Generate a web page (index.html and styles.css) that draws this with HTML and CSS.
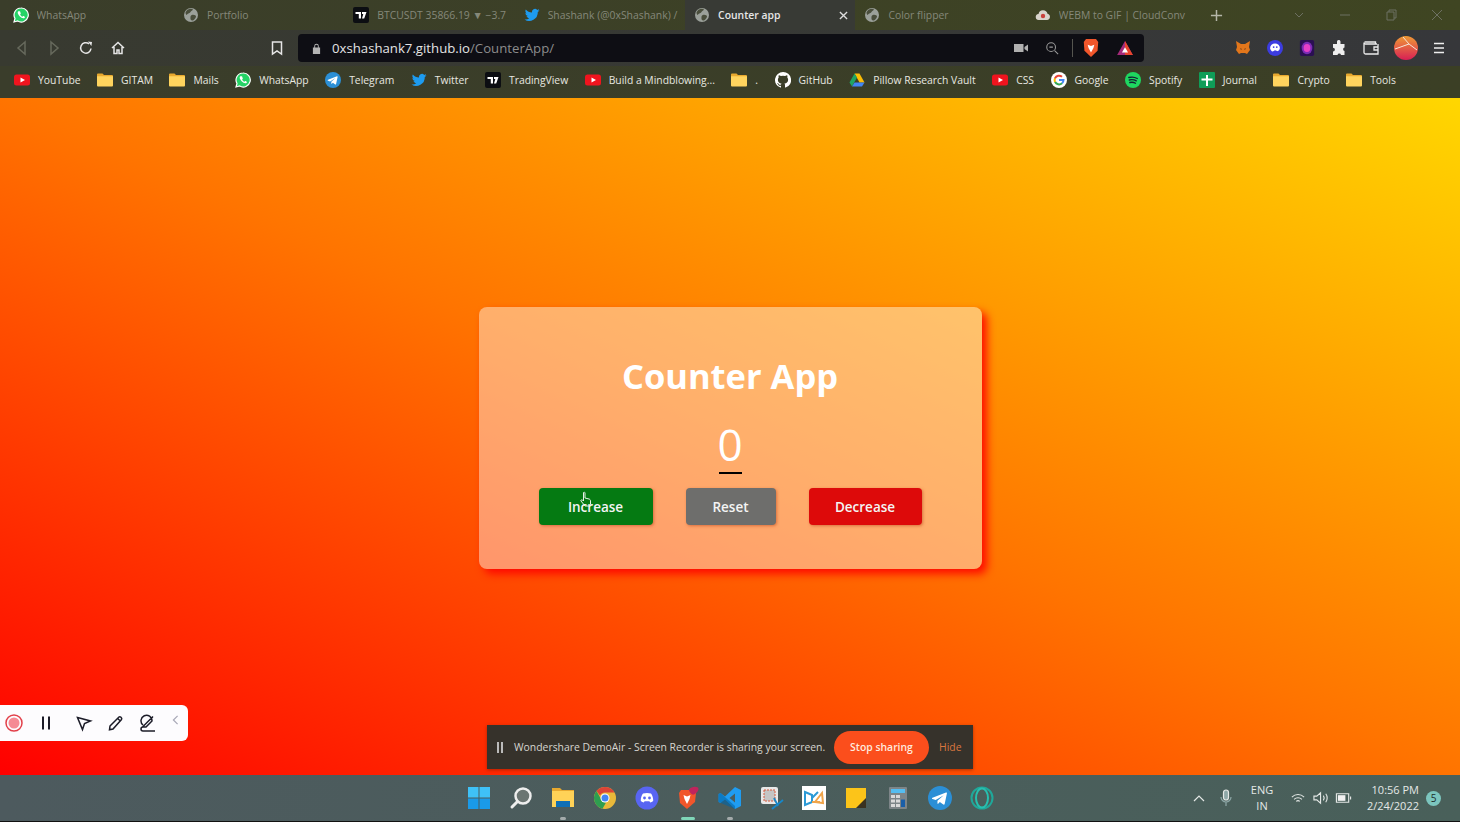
FILE: index.html
```html
<!DOCTYPE html>
<html>
  <head>
    <title>Counter app</title>
    <link rel="stylesheet" href="styles.css">
  </head>
  <body>
    <svg class="defs" width="0" height="0">
      <symbol id="whatsapp" viewBox="0 0 16 16">
        <path fill="#25d366" stroke="#fff" stroke-width="1.2" d="M8 1a7 7 0 0 0-6 10.500L1 15l3.700-1A7 7 0 1 0 8 1z"/>
        <path fill="#fff" d="M5.600 4.200c-.3 0-.9.5-.9 1.400 0 2.300 3.300 5.700 5.700 5.700 1 0 1.600-.8 1.600-1.300 0-.3-1.500-1-1.800-1l-.8.8c-.8-.2-2-1.400-2.300-2.200l.7-.8c.1-.3-.6-2.600-1-2.600z"/>
      </symbol>
      <symbol id="globe" viewBox="0 0 16 16">
        <circle cx="8" cy="8" r="7" fill="#9ba09a"/>
        <path fill="#4a4e3c" d="M5 2.500c2-1 4-1 5 0-.5 1.500-2 1-2.500 2.500S5 6 4 7.500 2.500 6 2.500 5.500 4 3 5 2.500zM9 8c2-.5 4 .5 4 1.500S11 14 9 13.500 7.500 11 7.500 10 8 8.300 9 8z"/>
      </symbol>
      <symbol id="tv" viewBox="0 0 16 16">
        <rect width="16" height="16" rx="2" fill="#0c0e12"/>
        <path fill="#fff" d="M2.500 5h5.500v6.500H5.800V7H2.500zM9 5h4.500l-2.300 6.500H9L10.300 7H9z"/>
      </symbol>
      <symbol id="twitter" viewBox="0 0 16 16">
        <path fill="#1d9bf0" d="M15.500 3.300c-.5.300-1.100.4-1.700.5.600-.4 1.100-1 1.300-1.700-.6.400-1.200.6-1.900.8A3 3 0 0 0 8 5.600C5.500 5.500 3.300 4.300 1.800 2.500c-.8 1.400-.4 3.100.9 4-.5 0-.9-.1-1.300-.4 0 1.500 1 2.700 2.400 3-.4.100-.9.100-1.300 0 .4 1.200 1.500 2 2.800 2.100A6 6 0 0 1 .5 12.500 8.600 8.600 0 0 0 13.800 5c.7-.4 1.300-1 1.700-1.700z"/>
      </symbol>
      <symbol id="youtube" viewBox="0 0 16 16">
        <rect y="2.500" width="16" height="11" rx="2.500" fill="#f0141e"/>
        <path fill="#fff" d="M6.500 5.500v5L11 8z"/>
      </symbol>
      <symbol id="folder" viewBox="0 0 16 16">
        <path fill="#e8a92f" d="M0 2.500A1 1 0 0 1 1 1.500h4.500L7 3h8a1 1 0 0 1 1 1v1H0z"/>
        <path fill="#ffd45e" d="M0 4.200h16v9.300a1 1 0 0 1-1 1H1a1 1 0 0 1-1-1z"/>
      </symbol>
      <symbol id="telegram" viewBox="0 0 16 16">
        <circle cx="8" cy="8" r="8" fill="#2b8fd6"/>
        <path fill="#fff" d="M3 7.800l9-3.500c.5-.1.700.2.600.7l-1.500 7c-.1.500-.5.600-.9.400L7.900 10.700l-1.100 1.100c-.2.200-.5.100-.5-.2V9.800l4.200-3.700-5.400 3.300L3 8.700c-.5-.2-.5-.6 0-.9z"/>
      </symbol>
    </svg>

    <div class="tabstrip">
      <div class="tab">
        <svg class="ico"><use href="#whatsapp"/></svg><span>WhatsApp</span>
      </div>
      <div class="tab">
        <svg class="ico"><use href="#globe"/></svg><span>Portfolio</span>
      </div>
      <div class="tab">
        <svg class="ico"><use href="#tv"/></svg><span>BTCUSDT 35866.19 ▼ −3.7</span>
      </div>
      <div class="tab">
        <svg class="ico"><use href="#twitter"/></svg><span>Shashank (@0xShashank) /</span>
      </div>
      <div class="tab tab-active">
        <svg class="ico"><use href="#globe"/></svg><span>Counter app</span>
        <svg class="tab-x" viewBox="0 0 10 10"><path d="M1 1l8 8M9 1l-8 8"/></svg>
      </div>
      <div class="tab">
        <svg class="ico"><use href="#globe"/></svg><span>Color flipper</span>
      </div>
      <div class="tab">
        <svg class="ico" viewBox="0 0 16 16"><path fill="#d8d4cc" d="M4 13a3 3 0 0 1-.5-6 4.600 4.600 0 0 1 9-.3A3.200 3.200 0 0 1 12 13z"/><circle cx="8" cy="9" r="2.200" fill="#c8413c"/></svg><span>WEBM to GIF | CloudConv</span>
      </div>
      <svg class="plus" viewBox="0 0 14 14"><path d="M7 1v12M1 7h12"/></svg>
      <div class="winctl">
        <svg viewBox="0 0 12 12"><path d="M2 4l4 4 4-4"/></svg>
        <svg viewBox="0 0 12 12"><path d="M1 6h10"/></svg>
        <svg viewBox="0 0 12 12"><path d="M2 3h7v8H2zM4 3V1h7v8H9"/></svg>
        <svg viewBox="0 0 12 12"><path d="M1 1l10 10M11 1L1 11"/></svg>
      </div>
    </div>

    <div class="toolbar">
      <div class="nav">
        <svg class="tb dim" viewBox="0 0 16 16"><path d="M11 2L4 8l7 6z"/></svg>
        <svg class="tb dim" viewBox="0 0 16 16"><path d="M5 2l7 6-7 6z"/></svg>
        <svg class="tb" viewBox="0 0 16 16"><path d="M13 8.500A5.200 5.200 0 1 1 11 3.800"/><path class="solid" d="M10 1.500l4 .5-.6 4z"/></svg>
        <svg class="tb" viewBox="0 0 16 16"><path d="M2 8l6-5.500L14 8M4 7v6.500h3V10h2v3.500h3V7"/></svg>
      </div>
      <svg class="tb bookmark" viewBox="0 0 16 16"><path d="M3.500 2h9v12L8 10.800 3.500 14z"/></svg>
      <div class="urlbar">
        <svg class="lock" viewBox="0 0 10 12"><path fill="#b4b4b4" d="M1 5h8v7H1zM2.500 5V3.300a2.500 2.500 0 0 1 5 0V5H6.500V3.300a1.500 1.500 0 0 0-3 0V5z"/></svg>
        <span class="url">0xshashank7.github.io<span class="url-path">/CounterApp/</span></span>
        <div class="url-end">
          <svg class="cam" viewBox="0 0 14 10"><path fill="#b0b0b0" d="M0 1h9.500v8H0zM10.500 4L14 1.500v7L10.500 6z"/></svg>
          <svg class="tb zoomglass" viewBox="0 0 16 16"><circle cx="7" cy="7" r="5"/><path d="M11 11l4 4M5 7h4"/></svg>
          <div class="url-sep"></div>
          <svg class="brave" viewBox="0 0 16 18"><path fill="#f1562b" d="M3.500 1h9l2 2.500-.6 8L8 17 2.100 11.500l-.6-8z"/><path fill="#fff" d="M5 6l3 1.200L11 6l-.8 3L8 13 5.800 9z"/></svg>
          <svg class="bat" viewBox="0 0 18 16"><path fill="#a42a7a" d="M9 0l9 16H0z"/><path fill="#e8452c" d="M9 0l9 16H9z"/><path fill="#fff" d="M9 7l3.500 6h-7z"/></svg>
        </div>
      </div>
      <div class="exts">
        <svg viewBox="0 0 16 16"><path fill="#e2761b" d="M1 1l5 3h4l5-3-1 6 1 3-3 4-2-1H6l-2 1-3-4 1-3z"/><path fill="#763d16" d="M5 8l2 1-1 1zM11 8l-2 1 1 1z"/></svg>
        <svg viewBox="0 0 18 18"><circle cx="9" cy="9" r="9" fill="#3c3ce0"/><path fill="#fff" d="M3.500 9a5.500 5 0 0 1 11 0c0 1.500-1.500 4-3 3.500L9 11.500 6.500 13C5 13 3.500 10.500 3.500 9z"/><circle cx="7.500" cy="8" r="1" fill="#3c3ce0"/><circle cx="11" cy="8" r="1" fill="#3c3ce0"/></svg>
        <svg viewBox="0 0 16 18"><rect width="16" height="18" rx="2" fill="#2a0f52"/><ellipse cx="8" cy="9" rx="6" ry="7" fill="#7a2bb5"/><ellipse cx="8" cy="9" rx="3.800" ry="4.500" fill="#e63fc8"/></svg>
        <svg viewBox="0 0 16 16"><path fill="#eeeeee" d="M6 1.500a1.800 1.800 0 0 1 3.500 0V4h4v3.500a1.800 1.800 0 0 0 0 3.500V15H10a1.800 1.800 0 0 0-3.500 0H2v-3.500a1.800 1.800 0 0 0 0-3.800V4h4z"/></svg>
        <svg class="wallet" viewBox="0 0 16 14"><path d="M14 3H2.500A1.500 1.500 0 0 1 1 1.500v10A1.500 1.500 0 0 0 2.500 13H15V3M1.500 1h11v2"/><path d="M15 6h-4v3h4"/></svg>
        <svg class="avatar" viewBox="0 0 24 24"><defs><linearGradient id="av" x1="0" y1="0" x2="0" y2="1"><stop offset="0" stop-color="#ef9a35"/><stop offset="1" stop-color="#d81f55"/></linearGradient></defs><circle cx="12" cy="12" r="12" fill="url(#av)"/><path fill="none" stroke="#f6e6d8" stroke-width="1" d="M1 13L15 8l8 6M9 1l6 7"/></svg>
        <svg class="menu" viewBox="0 0 12 12"><path d="M1 1.500h10M1 6h10M1 10.500h10"/></svg>
      </div>
    </div>

    <div class="bookmarks">
      <div class="bm"><svg class="ico"><use href="#youtube"/></svg>YouTube</div>
      <div class="bm"><svg class="ico"><use href="#folder"/></svg>GITAM</div>
      <div class="bm"><svg class="ico"><use href="#folder"/></svg>Mails</div>
      <div class="bm"><svg class="ico"><use href="#whatsapp"/></svg>WhatsApp</div>
      <div class="bm"><svg class="ico"><use href="#telegram"/></svg>Telegram</div>
      <div class="bm"><svg class="ico"><use href="#twitter"/></svg>Twitter</div>
      <div class="bm"><svg class="ico"><use href="#tv"/></svg>TradingView</div>
      <div class="bm"><svg class="ico"><use href="#youtube"/></svg>Build a Mindblowing...</div>
      <div class="bm"><svg class="ico"><use href="#folder"/></svg>.</div>
      <div class="bm"><svg class="ico" viewBox="0 0 16 16"><path fill="#fff" d="M8 0a8 8 0 0 0-2.500 15.600c.4.100.5-.2.500-.4v-1.400c-2.200.5-2.700-1-2.700-1-.4-.9-.9-1.200-.9-1.200-.7-.5.100-.5.100-.5.800.1 1.200.8 1.200.8.700 1.200 1.900.9 2.300.7.100-.5.300-.9.500-1.100-1.800-.2-3.600-.9-3.600-4 0-.9.300-1.600.8-2.100-.1-.2-.4-1 .1-2.100 0 0 .7-.2 2.200.8a7.600 7.600 0 0 1 4 0c1.500-1 2.200-.8 2.200-.8.400 1.100.2 1.900.1 2.100.5.600.8 1.300.8 2.100 0 3.100-1.900 3.800-3.700 4 .3.300.6.800.6 1.500v2.200c0 .2.100.5.600.4A8 8 0 0 0 8 0z"/></svg>GitHub</div>
      <div class="bm"><svg class="ico" viewBox="0 0 16 16"><path fill="#fbbc04" d="M5.500 1.500h5l5 9h-5z"/><path fill="#1fa463" d="M5.500 1.500L0.500 10.500l2.500 4 5-9z"/><path fill="#4285f4" d="M3 14.500h10l2.500-4h-10z"/></svg>Pillow Research Vault</div>
      <div class="bm"><svg class="ico"><use href="#youtube"/></svg>CSS</div>
      <div class="bm"><svg class="ico" viewBox="0 0 16 16"><circle cx="8" cy="8" r="8" fill="#fff"/><path fill="none" stroke="#4285f4" stroke-width="2" d="M8 8h4.500a4.500 4.500 0 0 1-1.500 3.300"/><path fill="none" stroke="#34a853" stroke-width="2" d="M11 11.300a4.500 4.500 0 0 1-7-1.500"/><path fill="none" stroke="#fbbc05" stroke-width="2" d="M4 9.800a4.500 4.500 0 0 1 0-3.600"/><path fill="none" stroke="#ea4335" stroke-width="2" d="M4 6.200a4.500 4.500 0 0 1 7-1.400"/></svg>Google</div>
      <div class="bm"><svg class="ico" viewBox="0 0 16 16"><circle cx="8" cy="8" r="8" fill="#1ed760"/><path fill="none" stroke="#123" stroke-width="1.300" stroke-linecap="round" d="M3.800 5.500c3-.8 6-.5 8.500 1M4.300 8c2.500-.6 5-.3 7 .9M4.800 10.500c2-.5 4-.3 5.700.7"/></svg>Spotify</div>
      <div class="bm"><svg class="ico" viewBox="0 0 16 16"><rect width="16" height="16" rx="1" fill="#0f9d58"/><path fill="#fff" d="M7 3h2v3.500h4.500v2H9V14H7V8.500H2.500v-2H7z"/></svg>Journal</div>
      <div class="bm"><svg class="ico"><use href="#folder"/></svg>Crypto</div>
      <div class="bm"><svg class="ico"><use href="#folder"/></svg>Tools</div>
    </div>

    <div class="page">
      <div class="card">
        <h1>Counter App</h1>
        <div class="count">0</div>
        <div class="btns">
          <button class="btn btn-inc">Increase
            <svg class="hand" viewBox="0 0 12 16"><path d="M3.500 1.500c.8-.8 1.500 0 1.500.5v5l4 1c1 .3 1.500 1 1.500 2v3l-1 2H5L1 10c-.5-1 .5-1.500 1.500-1l1 1V2z"/></svg>
          </button>
          <button class="btn btn-reset">Reset</button>
          <button class="btn btn-dec">Decrease</button>
        </div>
      </div>

      <div class="recorder">
        <svg class="rec" viewBox="0 0 18 18"><circle cx="9" cy="9" r="8" fill="none" stroke="#e2404a" stroke-width="1.500"/><circle cx="9" cy="9" r="5.500" fill="#f58a94"/></svg>
        <svg class="rtool rpause" viewBox="0 0 18 18"><path d="M6 2.500v13M12 2.500v13"/></svg>
        <svg class="rtool rcursor" viewBox="0 0 18 18"><path d="M2.500 3.500l13 3.500-6 2.500-2 6z"/></svg>
        <svg class="rtool" viewBox="0 0 18 18"><path d="M3 12L12 3c1-1 3.500 1 2.500 2.500L6 15l-3.500.8zM10.500 4.500l3 2.500"/></svg>
        <svg class="rtool" viewBox="0 0 18 18"><path d="M4 11a5.500 5.500 0 1 1 9-4L7 13H4a2 2 0 0 0 0 4h12M3.500 13L14 2.500"/></svg>
        <svg class="rchev" viewBox="0 0 8 12"><path d="M6.500 1L1.500 6l5 5"/></svg>
      </div>

      <div class="sharebar">
        <span class="share-pause"></span>
        <span class="share-text">Wondershare DemoAir - Screen Recorder is sharing your screen.</span>
        <span class="share-stop">Stop sharing</span>
        <span class="share-hide">Hide</span>
      </div>
    </div>

    <div class="taskbar">
      <div class="apps">
        <div class="app"><svg viewBox="0 0 24 24"><path fill="#3fc1f7" d="M1 1h10.500v10.500H1zM12.500 1H23v10.500H12.500z"/><path fill="#1a9ae8" d="M1 12.500h10.500V23H1zM12.500 12.500H23V23H12.500z"/></svg></div>
        <div class="app"><svg viewBox="0 0 24 24"><circle cx="14" cy="10" r="7.500" fill="#6b7572" stroke="#eeeeee" stroke-width="2.500"/><path stroke="#eeeeee" stroke-width="3" stroke-linecap="round" d="M8.500 15.500L3 21"/></svg></div>
        <div class="app app-open"><svg viewBox="0 0 24 24"><path fill="#e8a92f" d="M1 2h8l2 2h12v4H1z"/><path fill="#ffd257" d="M1 5h22v16H1z"/><path fill="#0f6fb5" d="M5 15h14v6H5z"/></svg></div>
        <div class="app"><svg viewBox="0 0 24 24"><circle cx="12" cy="12" r="11" fill="#e9b93a"/><path fill="#dc4437" d="M12 1a11 11 0 0 1 9.500 5.500H12a5.500 5.500 0 0 0-5 3L3.500 5A11 11 0 0 1 12 1z"/><path fill="#2e9e50" d="M3.500 5L8 13a5 5 0 0 0 5 3.500L9.500 22.700A11 11 0 0 1 3.500 5z"/><circle cx="12" cy="12" r="4.500" fill="#fff"/><circle cx="12" cy="12" r="3.500" fill="#4285f4"/></svg></div>
        <div class="app"><svg viewBox="0 0 24 24"><circle cx="12" cy="12" r="11.500" fill="#5865f2"/><path fill="#fff" d="M8 7.500c2.500-.8 5.500-.8 8 0 1.500 2 2.300 4.500 2.200 7.500-1 .8-2 1.200-3 1.500l-.8-1.300h-4.800l-.8 1.300c-1-.3-2-.7-3-1.500-.1-3 .7-5.500 2.200-7.500z"/><circle cx="9.500" cy="12" r="1.400" fill="#5865f2"/><circle cx="14.500" cy="12" r="1.400" fill="#5865f2"/></svg></div>
        <div class="app app-active"><svg viewBox="0 0 24 24"><path fill="#f1562b" d="M5 4h12l3 3-1 9-8 7-7-6-1-10z"/><path fill="#fff" d="M7.500 9L11 10.500 14.500 9l-1 4L11 18l-2.500-5z"/><path fill="#c0245c" d="M13 3.500C15 1 19 0 22 1.500c1.500 2-1 5.500-4 7-2.500 1-5-3-5-5z"/></svg></div>
        <div class="app app-open"><svg viewBox="0 0 24 24"><path fill="#1f9cf0" d="M17 1l6 3v16l-6 3-10-9.500L2.500 17 .5 16V8l2-1 4.500 3.500zM17 7.500L11.500 12l5.500 4.500z"/><path fill="#0065a9" d="M2.500 7L17 20v3L.5 16V8z" opacity=".6"/></svg></div>
        <div class="app"><svg viewBox="0 0 24 24"><rect x="1" y="1" width="17" height="17" rx="2" fill="#e8e8e8"/><rect x="4" y="4" width="11" height="11" fill="#c5c5c5" stroke="#d95a3c" stroke-dasharray="2 1"/><path stroke="#1787c9" stroke-width="1.800" fill="none" d="M12 23l11-9M14 12l4 8"/></svg></div>
        <div class="app"><svg viewBox="0 0 24 24"><rect width="24" height="24" fill="#ffffff"/><path fill="none" stroke="#2b9ad6" stroke-width="2" d="M3 6l7 3v7l-7 3zM10 12l6-6"/><path fill="none" stroke="#f0a54a" stroke-width="2" d="M13 16l7-9 1 10zM10 16h8"/></svg></div>
        <div class="app"><svg viewBox="0 0 24 24"><path fill="#fcc419" d="M2 2h20v20H2z"/><path fill="#3a3220" d="M12 22l10-10v10z"/></svg></div>
        <div class="app"><svg viewBox="0 0 24 24"><rect x="3" y="1" width="18" height="22" rx="1" fill="#7d8588"/><rect x="5" y="3" width="14" height="4" fill="#55bdf0"/><path fill="#d9d9d9" d="M5 9h4v3H5zM10 9h4v3h-4zM5 13.500h4v3H5zM10 13.500h4v3h-4zM5 18h4v3H5zM10 18h4v3h-4z"/><path fill="#1a5fa8" d="M15 13.500h4V21h-4z"/></svg></div>
        <div class="app"><svg viewBox="0 0 16 16"><use href="#telegram"/></svg></div>
        <div class="app"><svg viewBox="0 0 24 24"><circle cx="12" cy="12" r="10.500" fill="none" stroke="#1fa89a" stroke-width="2"/><ellipse cx="12" cy="12" rx="6" ry="9.500" fill="none" stroke="#26c0b0" stroke-width="2"/></svg></div>
      </div>
      <div class="tray">
        <svg class="t-chev" viewBox="0 0 12 8"><path d="M1 7l5-5 5 5"/></svg>
        <svg class="t-mic" viewBox="0 0 12 18"><rect x="3.500" y="1" width="5" height="10" rx="2.500" fill="#8ea8a8"/><path d="M1 8a5 5 0 0 0 10 0M6 13v4"/></svg>
        <div class="t-lang">ENG<br>IN</div>
        <svg class="t-wifi" viewBox="0 0 16 12"><path d="M1 4.500c4-4 10-4 14 0M3.500 7c2.500-2.500 6.500-2.500 9 0M6 9.300c1.200-1 2.800-1 4 0"/></svg>
        <svg class="t-vol" viewBox="0 0 18 14"><path d="M1 5h3l4-3.500v11L4 9H1zM11 4.500c1 1.500 1 3.500 0 5M13.500 2.500c2 2.500 2 6.500 0 9"/></svg>
        <svg class="t-bat" viewBox="0 0 18 12"><path d="M1.500 1.500h13v9h-13zM16.500 4.500v3"/><rect x="3" y="3" width="8" height="6" fill="#f2f2f2" stroke="none"/></svg>
        <div class="t-clock">10:56 PM<br>2/24/2022</div>
        <div class="t-badge">5</div>
      </div>
    </div>
  </body>
</html>
```

FILE: styles.css
```css
* {
  box-sizing: border-box;
}

html, body {
  height: 100%;
}

body {
  margin: 0;
  display: flex;
  flex-direction: column;
  overflow: hidden;
  font-family: 'Open Sans', sans-serif;
  background: #000;
}

.defs {
  position: absolute;
}

.ico {
  width: 16px;
  height: 16px;
  flex: none;
}

/* tab strip */
.tabstrip {
  height: 30px;
  display: flex;
  align-items: center;
  padding-left: 3px;
  background: linear-gradient(90deg, #3a3d2a, #3f4522);
}

.tab {
  width: 170.4px;
  height: 30px;
  display: flex;
  align-items: center;
  gap: 8px;
  padding-left: 9.5px;
  font-size: 10.4px;
  color: #85887a;
  white-space: nowrap;
  overflow: hidden;
}

.tab span {
  width: 130px;
  overflow: hidden;
}

.tab-active {
  background: #383a35;
  color: #e6e6e6;
  font-weight: 600;
  position: relative;
}

.tab-x {
  position: absolute;
  right: 7px;
  top: 11px;
  width: 9px;
  height: 9px;
  fill: none;
  stroke: #ddd;
  stroke-width: 1.5;
}

.plus {
  width: 13px;
  height: 13px;
  margin-left: 14px;
  fill: none;
  stroke: #b4b6a8;
  stroke-width: 1.6;
}

.winctl {
  margin-left: auto;
  display: flex;
  gap: 34px;
  padding-right: 17px;
}

.winctl svg {
  width: 12px;
  height: 12px;
  fill: none;
  stroke: #6d7062;
  stroke-width: 1;
}

/* toolbar */
.toolbar {
  height: 36px;
  display: flex;
  align-items: center;
  background: linear-gradient(90deg, #383a30, #36373a);
}

.nav {
  display: flex;
  gap: 16px;
  padding-left: 14px;
}

.tb {
  width: 16px;
  height: 16px;
  fill: none;
  stroke: #e6e6e6;
  stroke-width: 1.5;
}

.tb .solid {
  fill: #e6e6e6;
  stroke: none;
}

.tb.dim {
  stroke: #66695c;
}

.bookmark {
  margin-left: 143px;
}

.urlbar {
  width: 846px;
  height: 28px;
  margin-left: 13px;
  display: flex;
  align-items: center;
  padding: 0 11px 0 14px;
  background: #0e0e14;
  border-radius: 4px;
}

.lock {
  width: 9px;
  height: 11px;
  margin-right: 11px;
}

.url {
  font-size: 13.2px;
  color: #e4e4e4;
}

.url-path {
  color: #8c8c8c;
}

.url-end {
  margin-left: auto;
  display: flex;
  align-items: center;
}

.cam {
  width: 14px;
  height: 10px;
}

.zoomglass {
  width: 14px;
  height: 14px;
  margin-left: 17px;
  stroke: #999;
  stroke-width: 1.2;
}

.url-sep {
  width: 1px;
  height: 18px;
  margin: 0 9px 0 13px;
  background: #55554f;
}

.brave {
  width: 18px;
  height: 20px;
}

.bat {
  width: 16px;
  height: 14px;
  margin-left: 17px;
}

.exts {
  flex: 1;
  display: flex;
  align-items: center;
  gap: 16px;
  padding-left: 91px;
}

.exts svg {
  width: 16px;
  height: 16px;
  flex: none;
}

.exts .wallet {
  fill: none;
  stroke: #ececec;
  stroke-width: 1.3;
}

.exts .avatar {
  width: 24px;
  height: 24px;
  margin: 0 -6px 0 -1px;
}

.exts .menu {
  width: 12px;
  height: 12px;
  margin-left: 5px;
  fill: none;
  stroke: #eee;
  stroke-width: 1.5;
}

/* bookmarks */
.bookmarks {
  height: 32px;
  display: flex;
  align-items: center;
  gap: 16.5px;
  padding: 0 0 4px 14px;
  background: linear-gradient(90deg, #3a3d2b, #3b3f25);
  font-size: 10.35px;
  color: #e8e8e0;
  white-space: nowrap;
}

.bm {
  display: flex;
  align-items: center;
  gap: 8px;
}

/* page */
.page {
  flex: 1;
  position: relative;
  display: flex;
  align-items: center;
  justify-content: center;
  padding-top: 3px;
  background: linear-gradient(to top right, #ff0000 0%, #ff7400 50%, #ffd700 100%);
}

.card {
  width: 503px;
  height: 262px;
  display: flex;
  flex-direction: column;
  align-items: center;
  padding-top: 45px;
  color: #fff;
  background: rgba(255, 255, 255, 0.42);
  border-radius: 8px;
  box-shadow: 5px 5px 9px rgba(255, 0, 0, 0.9);
}

h1 {
  margin: 0;
  font-size: 34.5px;
  line-height: 48px;
  font-weight: 700;
}

.count {
  display: flex;
  justify-content: center;
  width: 23px;
  margin-top: 20px;
  font-size: 44px;
  font-weight: 500;
  line-height: 48px;
  border-bottom: 2px solid #000;
  padding-bottom: 4px;
}

.btns {
  display: flex;
  gap: 33px;
  margin-top: 14px;
}

.btn {
  position: relative;
  height: 37px;
  border: none;
  border-radius: 4px;
  font-family: 'Open Sans', sans-serif;
  font-size: 13.5px;
  font-weight: 600;
  color: #f4f4f4;
  box-shadow: 1px 1px 3px rgba(180, 60, 20, 0.5);
}

.btn-inc {
  width: 114px;
  background: #057a12;
}

.btn-reset {
  width: 90px;
  background: #6e6e6c;
}

.btn-dec {
  width: 113px;
  background: #dd0a0a;
}

/* mouse pointer caught in the recording */
.hand {
  position: absolute;
  left: 41px;
  top: 3px;
  width: 12px;
  height: 16px;
  fill: none;
  stroke: #e8f0e8;
  stroke-width: 1;
}

/* screen recorder floats */
.recorder {
  position: absolute;
  left: 0;
  top: 607px;
  width: 188px;
  height: 36px;
  display: flex;
  align-items: center;
  padding-left: 5px;
  background: #fdfcfe;
  border-radius: 0 6px 6px 0;
}

.rec {
  width: 18px;
  height: 18px;
}

.rtool {
  width: 18px;
  height: 18px;
  margin-left: 14px;
  fill: none;
  stroke: #1c1c28;
  stroke-width: 1.5;
}

.rpause {
  stroke-width: 2;
}

.rcursor {
  margin-left: 20px;
}

.rchev {
  width: 7px;
  height: 10px;
  margin: -6px 0 0 15px;
  fill: none;
  stroke: #a9a9b8;
  stroke-width: 1.5;
}

.sharebar {
  position: absolute;
  left: 487px;
  top: 627px;
  width: 486px;
  height: 44px;
  display: flex;
  align-items: center;
  padding-left: 10px;
  background: #36322b;
  box-shadow: 0 1px 3px rgba(120, 30, 0, 0.6);
  font-size: 10.4px;
  color: #d6d6d0;
  white-space: nowrap;
}

.share-pause {
  width: 6px;
  height: 11px;
  margin-right: 11px;
  border-left: 2px solid #bbb;
  border-right: 2px solid #bbb;
}

.share-text {
  width: 320px;
}

.share-stop {
  width: 95px;
  height: 33px;
  line-height: 33px;
  text-align: center;
  border-radius: 17px;
  background: #fb4e1c;
  color: #ffe9de;
  font-weight: 600;
}

.share-hide {
  margin-left: 10px;
  color: #d9763f;
}

/* windows taskbar */
.taskbar {
  height: 47px;
  display: flex;
  align-items: center;
  padding-left: 458px;
  background: linear-gradient(90deg, #4d5a5e, #49605a);
  border-bottom: 1px solid #111;
}

.apps {
  display: flex;
}

.app {
  width: 41.9px;
  height: 44px;
  display: flex;
  align-items: center;
  justify-content: center;
  position: relative;
}

.app svg {
  width: 24px;
  height: 24px;
}

.app-open::after,
.app-active::after {
  content: "";
  position: absolute;
  bottom: 0;
  left: 50%;
  width: 6px;
  height: 3px;
  margin-left: -3px;
  border-radius: 2px;
  background: #a4abab;
}

.app-active::after {
  width: 14px;
  margin-left: -7px;
  background: #7fd6b8;
}

.tray {
  margin-left: auto;
  display: flex;
  align-items: center;
  padding-right: 19px;
  color: #e4e8e6;
  font-size: 11px;
  line-height: 16px;
  text-align: center;
}

.tray svg {
  fill: none;
  stroke: #e4e8e6;
  stroke-width: 1.2;
}

.t-chev {
  width: 12px;
  height: 8px;
}

.t-mic {
  width: 12px;
  height: 18px;
  margin-left: 15px;
}

.t-mic path {
  stroke: #8ea8a8;
}

.t-lang {
  width: 30px;
  margin-left: 15px;
}

.t-wifi {
  width: 14px;
  height: 11px;
  margin-left: 14px;
}

.t-vol {
  width: 17px;
  height: 14px;
  margin-left: 8px;
}

.t-bat {
  width: 17px;
  height: 12px;
  margin-left: 5px;
}

.t-clock {
  width: 60px;
  margin-left: 7px;
  text-align: right;
}

.t-badge {
  width: 15px;
  height: 15px;
  line-height: 15px;
  margin-left: 7px;
  border-radius: 50%;
  background: #7cc5be;
  color: #1b2b2b;
  font-size: 10px;
}
```
